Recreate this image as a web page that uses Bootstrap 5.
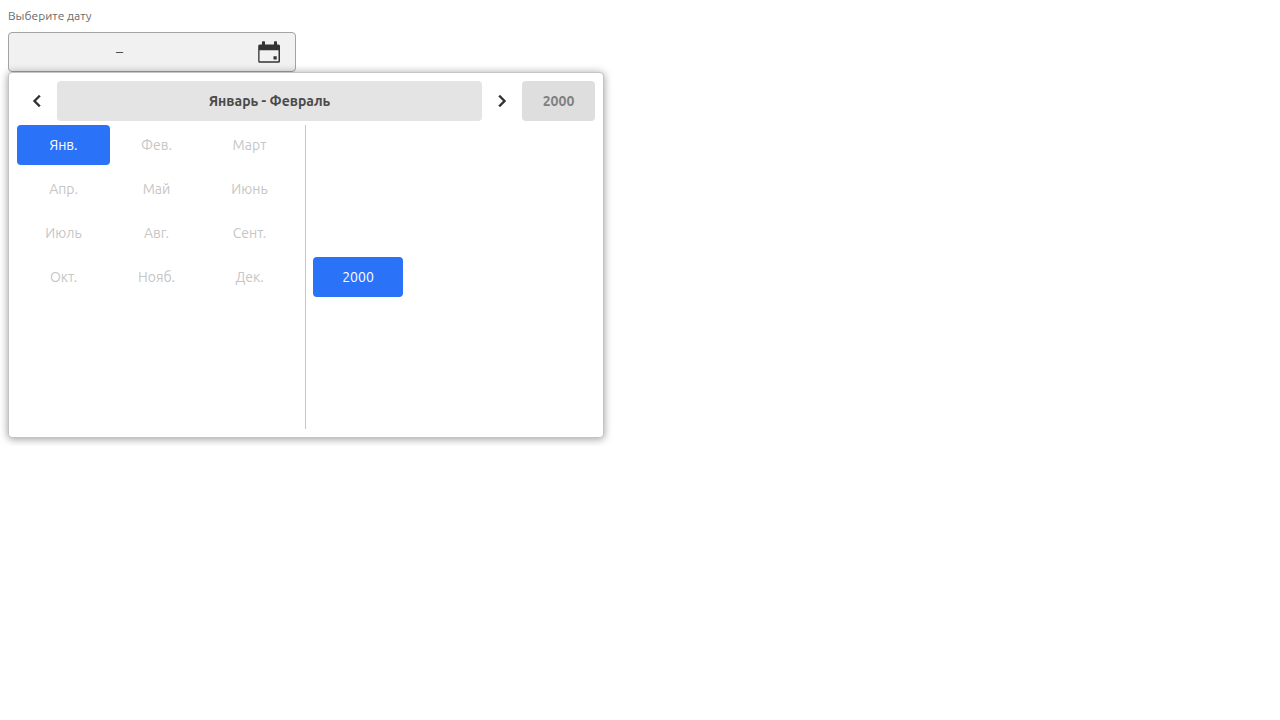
<!DOCTYPE html>
<html lang="ru">
<head>
<meta charset="utf-8">
<meta name="viewport" content="width=device-width, initial-scale=1">
<title>Выбор периода</title>
<link rel="stylesheet" href="https://cdn.jsdelivr.net/npm/bootstrap@5.3.0/dist/css/bootstrap.min.css">
<style>
  body { font-family: Ubuntu, "Noto Sans", sans-serif; font-size: 14px; line-height: 20px; color: #4a4a4a; background: #fff; }
  .picker-label { font-size: 12px; line-height: 16px; color: #6b6b6b; }
  .range-field { max-width: 288px; height: 40px; border: 1px solid #a3a3a3; background: #f1f1f1; border-radius: 4px; }
  .range-field input { width: 107px; min-width: 0; color: #4a4a4a; }
  .open-calendar { margin-right: 14px; }
  .picker-popup { max-width: 596px; border: 1px solid #c4c4c4; border-radius: 4px; background: #fff; box-shadow: 0 1px 8px rgba(0, 0, 0, .4); }
  .cell { height: 40px; border: 0; padding: 0; border-radius: 4px; background: transparent; color: #c6c6c6; }
  .cell.chosen { background: #2a72f8; color: #fff; }
  .cell.arrow { width: 40px; color: #333; }
  .arrow svg { stroke: currentColor; stroke-width: .4; }
  .cell.period-title { background: #e4e4e4; color: #4a4a4a; }
  .cell.year-title { width: 73px; background: #dedede; color: #808080; }
  .months, .years { display: grid; grid-template-columns: repeat(3, 1fr); row-gap: 4px; }
  .months { grid-auto-rows: 40px; padding-right: 9px; border-right: 1px solid #c6c6c6; }
  .years { grid-template-rows: repeat(7, 40px); padding-left: 7px; }
  .years .cell { grid-row: 4; margin-right: 4px; }
</style>
</head>
<body>
<main class="p-2">
  <label class="picker-label d-block mb-2" for="date-from">Выберите дату</label>
  <div class="range-field d-flex align-items-center">
    <input id="date-from" class="border-0 bg-transparent p-0" type="text">
    <span>–</span>
    <input class="border-0 bg-transparent p-0 flex-fill" type="text" aria-label="Конец периода">
    <button type="button" class="open-calendar btn border-0 p-0 d-flex" aria-label="Открыть календарь">
      <svg width="24" height="24" viewBox="0 0 24 24" fill="#333" aria-hidden="true">
        <path fill-rule="evenodd" d="M5 2q0-.7.7-.7h1.600q.7 0 .7.7v2.500h9V2q0-.7.7-.7h1.600q.7 0 .7.7v2.500h1.500a1.500 1.500 0 0 1 1.500 1.500v15.200a1.500 1.500 0 0 1-1.500 1.500h-18.800A1.500 1.500 0 0 1 1.200 21.200V6a1.500 1.500 0 0 1 1.500-1.500H5zM2.500 10.200v11.100h19V10.200zM16.500 16.300H19.700v3.300h-3.200z"/>
      </svg>
    </button>
  </div>
  <section class="picker-popup p-2" aria-label="Выбор месяца и года">
    <div class="d-flex mb-1">
      <button type="button" class="cell arrow" aria-label="Назад"><svg width="24" height="24" viewBox="0 0 24 24" fill="currentColor" aria-hidden="true"><path d="M15.410 7.410 14 6l-6 6 6 6 1.410-1.410L10.830 12z"/></svg></button>
      <button type="button" class="cell period-title flex-fill fw-bold">Январь - Февраль</button>
      <button type="button" class="cell arrow" aria-label="Вперёд"><svg width="24" height="24" viewBox="0 0 24 24" fill="currentColor" aria-hidden="true"><path d="M10 6 8.590 7.410 13.170 12l-4.580 4.590L10 18l6-6z"/></svg></button>
      <button type="button" class="cell year-title fw-bold">2000</button>
    </div>
    <div class="d-flex">
      <div class="months w-50">
        <button type="button" class="cell chosen">Янв.</button>
        <button type="button" class="cell">Фев.</button>
        <button type="button" class="cell">Март</button>
        <button type="button" class="cell">Апр.</button>
        <button type="button" class="cell">Май</button>
        <button type="button" class="cell">Июнь</button>
        <button type="button" class="cell">Июль</button>
        <button type="button" class="cell">Авг.</button>
        <button type="button" class="cell">Сент.</button>
        <button type="button" class="cell">Окт.</button>
        <button type="button" class="cell">Нояб.</button>
        <button type="button" class="cell">Дек.</button>
      </div>
      <div class="years w-50">
        <button type="button" class="cell chosen">2000</button>
      </div>
    </div>
  </section>
</main>
<script src="https://cdn.jsdelivr.net/npm/bootstrap@5.3.0/dist/js/bootstrap.bundle.min.js"></script>
</body>
</html>
